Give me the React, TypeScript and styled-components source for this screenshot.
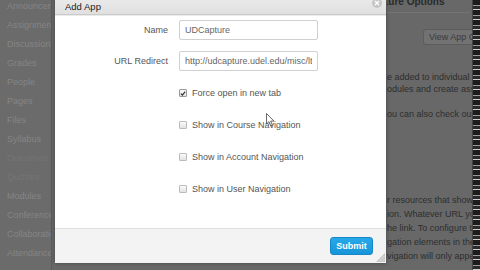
import styled, { createGlobalStyle } from 'styled-components'

const navItems = [
  { label: 'Announcements', faint: false },
  { label: 'Assignments', faint: false },
  { label: 'Discussions', faint: false },
  { label: 'Grades', faint: false },
  { label: 'People', faint: false },
  { label: 'Pages', faint: false },
  { label: 'Files', faint: false },
  { label: 'Syllabus', faint: false },
  { label: 'Outcomes', faint: true },
  { label: 'Quizzes', faint: true },
  { label: 'Modules', faint: false },
  { label: 'Conferences', faint: false },
  { label: 'Collaborations', faint: false },
  { label: 'Attendance', faint: false },
]

const options = [
  { label: 'Force open in new tab', checked: true },
  { label: 'Show in Course Navigation', checked: false },
  { label: 'Show in Account Navigation', checked: false },
  { label: 'Show in User Navigation', checked: false },
]

const App = () => {
  return (
    <Page>
      <GlobalStyle />
      <Sidebar>
        {navItems.map((item) => (
          <NavItem key={item.label} $faint={item.faint}>
            {item.label}
          </NavItem>
        ))}
      </Sidebar>

      <Content>
        <Hidden />
        <Visible>
          <Heading>ture Options</Heading>
          <GhostButton>View App Configurations</GhostButton>
          <Para $top={26} $lh={12}>
            e added to individual courses
            <br />
            odules and create assignments
          </Para>
          <Para $top={13} $lh={12}>
            ou can also check out the
          </Para>
          <Para $top={73} $lh={14}>
            r resources that show up
            <br />
            ion. Whatever URL you enter
            <br />
            he link. To configure the
            <br />
            gation elements in the course
            <br />
            vigation will only appear
          </Para>
        </Visible>
      </Content>

      <Scrollbar />

      <Dialog>
        <TitleBar>
          <Title>Add App</Title>
          <CloseButton>
            <svg width="6" height="6" viewBox="0 0 6 6">
              <path d="M1 1 L5 5 M5 1 L1 5" stroke="#fff" strokeWidth="1.4" />
            </svg>
          </CloseButton>
        </TitleBar>

        <Body>
          <FormGrid>
            <Label>Name</Label>
            <Input type="text" defaultValue="UDCapture" />
            <Label>URL Redirect</Label>
            <Input type="text" defaultValue="http://udcapture.udel.edu/misc/lt-launch" />
          </FormGrid>

          <CheckList>
            {options.map((opt) => (
              <CheckRow key={opt.label}>
                <Box $checked={opt.checked}>
                  {opt.checked && (
                    <svg width="7" height="7" viewBox="0 0 7 7">
                      <path d="M1 3.6 L2.8 5.4 L6 1.3" stroke="#333" strokeWidth="1.4" fill="none" />
                    </svg>
                  )}
                </Box>
                <CheckLabel>{opt.label}</CheckLabel>
              </CheckRow>
            ))}
          </CheckList>
        </Body>

        <Footer>
          <SubmitButton>Submit</SubmitButton>
        </Footer>

        <ResizeHandle>
          <svg width="9" height="9" viewBox="0 0 9 9">
            <path d="M9 0 L9 9 L0 9 Z" fill="#c4c4c4" />
            <path d="M8.5 3 L3 8.5 M8.5 6 L6 8.5" stroke="#eee" strokeWidth="0.8" />
          </svg>
        </ResizeHandle>
      </Dialog>

      <Cursor>
        <svg width="9" height="14" viewBox="0 0 9 14">
          <path
            d="M0.5 0.5 L0.5 11 L3 8.6 L4.8 12.8 L6.4 12.1 L4.7 8.1 L8 8.1 Z"
            fill="#fff"
            stroke="#444"
            strokeWidth="0.8"
          />
        </svg>
      </Cursor>
    </Page>
  )
}

const GlobalStyle = createGlobalStyle`
  html, body {
    margin: 0;
    padding: 0;
    background: #696969;
    overflow: hidden;
  }
  * {
    box-sizing: border-box;
  }
`

const Page = styled.div`
  position: relative;
  width: 480px;
  height: 270px;
  display: flex;
  overflow: hidden;
  background: #686868;
  font-family: 'Liberation Sans', Arial, sans-serif;
  font-size: 9px;
`

const Sidebar = styled.div`
  width: 52px;
  flex-shrink: 0;
  display: flex;
  flex-direction: column;
  margin-top: -3px;
  padding-left: 7px;
  border-right: 1px solid #5b5b5b;
  background: #6b6b6b;
  overflow: hidden;
`

const NavItem = styled.div<{ $faint: boolean }>`
  height: 19px;
  line-height: 19px;
  white-space: nowrap;
  overflow: hidden;
  color: ${(p) => (p.$faint ? '#757575' : '#858585')};
`

const Content = styled.div`
  flex: 1;
  display: grid;
  grid-template-columns: 335px 1fr;
  overflow: hidden;
`

const Hidden = styled.div``

const Visible = styled.div`
  display: flex;
  flex-direction: column;
  align-items: flex-start;
  color: #2f2f2f;
  white-space: nowrap;
  overflow: hidden;
`

const Heading = styled.div`
  margin-top: -5px;
  margin-left: -2px;
  width: 100%;
  line-height: 14px;
  padding-bottom: 3px;
  border-bottom: 1px solid #747474;
  font-size: 10px;
  font-weight: bold;
  color: #2a2a2a;
`

const GhostButton = styled.div`
  margin-top: 16px;
  margin-left: 36px;
  height: 16px;
  line-height: 14px;
  padding: 0 5px;
  border: 1px solid #5c5c5c;
  border-radius: 3px;
  background: #727272;
  color: #3a3a3a;
`

const Para = styled.div<{ $top: number; $lh: number }>`
  margin-top: ${(p) => p.$top}px;
  line-height: ${(p) => p.$lh}px;
  color: #2e2e2e;
`

const Scrollbar = styled.div`
  width: 8px;
  flex-shrink: 0;
  background: repeating-linear-gradient(
    to bottom,
    #1c1c1c 0px,
    #1c1c1c 5px,
    #9a9a9a 5px,
    #9a9a9a 6px,
    #2a2a2a 6px,
    #2a2a2a 9px,
    #d0d0d0 9px,
    #d0d0d0 10px
  );
  border-left: 1px solid #444;
`

const Dialog = styled.div`
  position: absolute;
  left: 55px;
  top: -4px;
  width: 331px;
  height: 267px;
  display: flex;
  flex-direction: column;
  background: #fff;
  box-shadow: 0 0 4px rgba(0, 0, 0, 0.35);
`

const TitleBar = styled.div`
  position: relative;
  height: 19px;
  flex-shrink: 0;
  display: flex;
  align-items: center;
  padding: 2px 10px 0;
  background: linear-gradient(to bottom, #ececec, #e0e0e0);
  border-bottom: 1px solid #cbcbcb;
  box-shadow: 0 1px 0 #eaeaea;
`

const Title = styled.span`
  font-size: 9.5px;
  color: #222;
`

const CloseButton = styled.div`
  position: absolute;
  right: 4px;
  top: 2px;
  width: 10px;
  height: 10px;
  border-radius: 50%;
  background: #c6c6c6;
  display: flex;
  align-items: center;
  justify-content: center;
`

const Body = styled.div`
  flex: 1;
  padding-top: 5px;
`

const FormGrid = styled.div`
  display: grid;
  grid-template-columns: 113px 139px;
  column-gap: 11px;
  row-gap: 11px;
  align-items: center;
`

const Label = styled.label`
  text-align: right;
  color: #555;
  font-size: 9px;
`

const Input = styled.input`
  height: 20px;
  width: 139px;
  padding: 0 5px;
  border: 1px solid #d0d0d0;
  border-radius: 2px;
  font-family: 'Liberation Sans', Arial, sans-serif;
  font-size: 9px;
  color: #666;
  background: #fff;
  outline: none;
`

const CheckList = styled.div`
  display: flex;
  flex-direction: column;
  gap: 10px;
  margin-top: 11px;
  padding-left: 124px;
`

const CheckRow = styled.div`
  height: 22px;
  display: flex;
  align-items: center;
  gap: 5px;
`

const Box = styled.span<{ $checked: boolean }>`
  width: 8px;
  height: 8px;
  border: 1px solid ${(p) => (p.$checked ? '#999' : '#bbb')};
  border-radius: 1px;
  background: linear-gradient(to bottom, #fafafa, #e2e2e2);
  display: flex;
  align-items: center;
  justify-content: center;
  overflow: visible;
`

const CheckLabel = styled.span`
  color: #555;
  white-space: nowrap;
`

const Footer = styled.div`
  height: 35px;
  flex-shrink: 0;
  display: flex;
  align-items: center;
  justify-content: flex-end;
  padding-right: 13px;
  background: #f3f3f3;
  border-top: 1px solid #e0e0e0;
`

const SubmitButton = styled.button`
  width: 43px;
  height: 18px;
  padding: 0;
  border: 1px solid #1488c8;
  border-radius: 3px;
  background: linear-gradient(to bottom, #27a8e8, #1795d8);
  color: #fff;
  font-family: 'Liberation Sans', Arial, sans-serif;
  font-size: 9px;
  font-weight: bold;
`

const ResizeHandle = styled.div`
  position: absolute;
  right: 1px;
  bottom: 1px;
  width: 9px;
  height: 9px;
  display: flex;
`

const Cursor = styled.div`
  position: absolute;
  left: 266px;
  top: 113px;
  width: 9px;
  height: 14px;
  display: flex;
`

export default App
